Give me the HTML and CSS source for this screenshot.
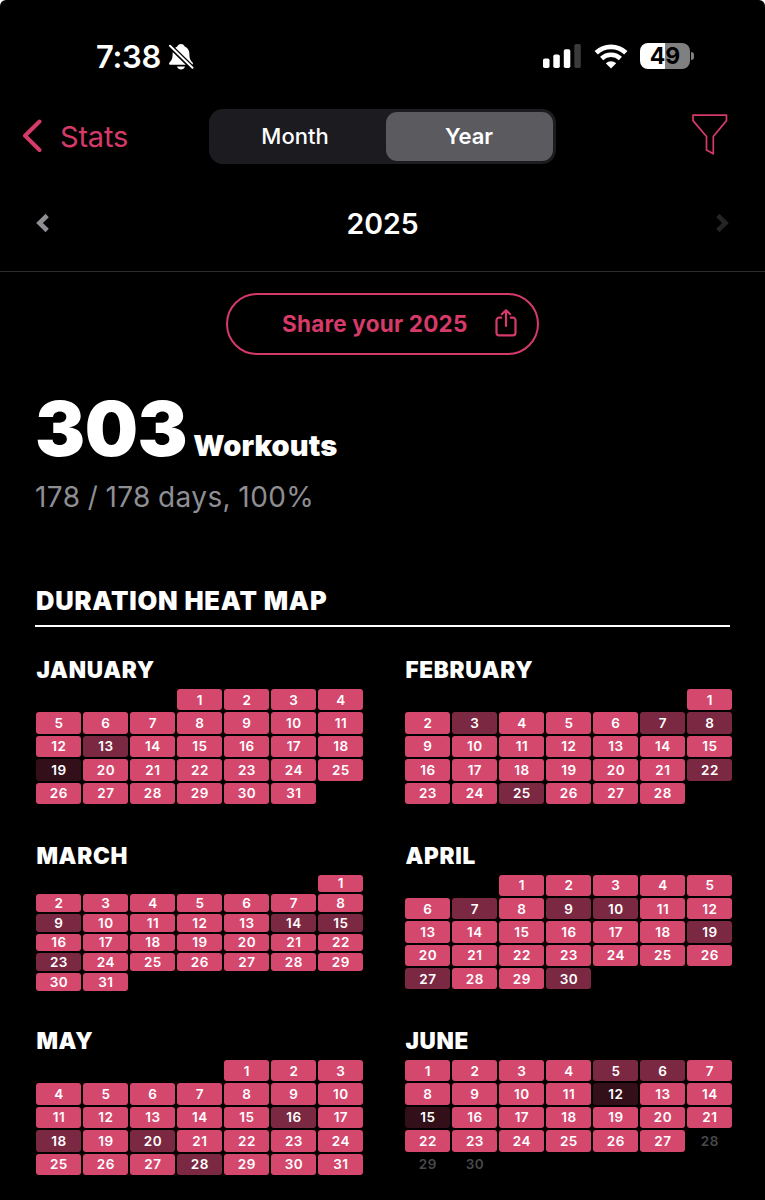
FILE: index.html
```
<!DOCTYPE html>
<html lang="en">
<head>
    <meta charset="UTF-8">
    <meta name="viewport" content="width=device-width, initial-scale=1.0">
    <title>Stats - 2025</title>
    <link rel="stylesheet" href="styles.css">
</head>
<body>
    <div class="screen">
        <div class="status-bar">
            <div class="status-left">
                <span class="clock">7:38</span>
                <svg class="bell" width="26" height="28" viewBox="0 0 26 28">
                    <path d="M13 1c-1.900 0-3.200 1-3.700 2.500C6 4.800 4.600 7.600 4.600 11c0 5-1.100 6.300-3.100 8.400-.9 1-.4 2.400 1 2.400h21c1.400 0 1.900-1.400 1-2.400-2-2.100-3.100-3.400-3.100-8.400 0-3.400-1.400-6.200-4.700-7.500C16.200 2 14.900 1 13 1z" fill="#fff"/>
                    <path d="M9 23.600h8c-.6 1.900-2.100 3-4 3s-3.400-1.100-4-3z" fill="#fff"/>
                    <path d="M1.500 2.500l23 22.500" stroke="#000" stroke-width="4.800"/>
                    <path d="M2 2.800l22.500 22" stroke="#fff" stroke-width="2" stroke-linecap="round"/>
                </svg>
            </div>
            <div class="status-right">
                <svg width="38" height="25" viewBox="0 0 38 25">
                    <rect x="0" y="14.500" width="6.500" height="9.500" rx="1.800" fill="#fff"/>
                    <rect x="10.300" y="10.500" width="6.500" height="13.500" rx="1.800" fill="#fff"/>
                    <rect x="20.800" y="5.300" width="6.500" height="18.700" rx="1.800" fill="#fff"/>
                    <rect x="31.300" y="0" width="6.500" height="24" rx="1.800" fill="#3a3a3a"/>
                </svg>
                <svg class="wifi" width="34" height="25" viewBox="0 0 34 25">
                    <path d="M2.200 8.700a21.500 21.500 0 0 1 29.600 0" fill="none" stroke="#fff" stroke-width="4.800"/>
                    <path d="M7.600 14.500a13.800 13.800 0 0 1 18.800 0" fill="none" stroke="#fff" stroke-width="4.500"/>
                    <path d="M17 24.500l-5.200-5.200a7.700 7.700 0 0 1 10.400 0z" fill="#fff"/>
                </svg>
                <div class="battery">49</div>
                <span class="battery-cap"></span>
            </div>
        </div>

        <div class="nav">
            <a class="back">
                <svg width="22" height="36" viewBox="0 0 22 36">
                    <path d="M19.500 3.500L5 17.700l14.500 14.300" fill="none" stroke="#d63a68" stroke-width="4" stroke-linecap="round" stroke-linejoin="round"/>
                </svg>
                <span>Stats</span>
            </a>
            <div class="segmented">
                <div class="segment">Month</div>
                <div class="segment active">Year</div>
            </div>
            <svg class="filter" width="36" height="42" viewBox="0 0 36 42">
                <path d="M1 1.200h33.500v5.400L21.300 22.500v17.300l-6.800-3.700V22.500L1 6.600z" fill="none" stroke="#d63a68" stroke-width="1.700" stroke-linejoin="round"/>
            </svg>
        </div>

        <div class="year-row">
            <svg width="14" height="20" viewBox="0 0 14 20">
                <path d="M11.200 2.500L3.500 10l7.700 7.500" fill="none" stroke="#8e8e93" stroke-width="4.600"/>
            </svg>
            <span class="year">2025</span>
            <svg width="14" height="20" viewBox="0 0 14 20">
                <path d="M2.800 2.500l7.700 7.500-7.700 7.500" fill="none" stroke="#242426" stroke-width="4.600"/>
            </svg>
        </div>

        <div class="share">
            <span>Share your 2025</span>
            <svg width="22" height="29" viewBox="0 0 22 29">
                <path d="M6.200 8.700H4a2.500 2.500 0 0 0-2.500 2.500v12.600A2.500 2.500 0 0 0 4 26.300h14a2.500 2.500 0 0 0 2.500-2.500V11.200A2.500 2.500 0 0 0 18 8.700h-2.200M11 17V1.600M6.800 5.200L11 1.200l4.200 4" fill="none" stroke="#d63a68" stroke-width="2.200" stroke-linecap="round" stroke-linejoin="round"/>
            </svg>
        </div>

        <div class="summary">
            <div class="total"><span class="count">303</span><span class="unit">Workouts</span></div>
            <div class="days-total">178 / 178 days, 100%</div>
        </div>

        <h2>DURATION HEAT MAP</h2>
        <div class="months" id="months"></div>
    </div>

    <script>
        // start: weekday of the 1st (0 = Sunday), mid / low: shorter workout days
        const months = [
            { name: 'JANUARY', start: 3, days: 31, mid: [13], low: [19] },
            { name: 'FEBRUARY', start: 6, days: 28, mid: [3, 7, 8, 22, 25], low: [] },
            { name: 'MARCH', start: 6, days: 31, mid: [9, 14, 15, 23], low: [] },
            { name: 'APRIL', start: 2, days: 30, mid: [7, 9, 10, 19, 27, 30], low: [] },
            { name: 'MAY', start: 4, days: 31, mid: [16, 18, 20, 28], low: [] },
            { name: 'JUNE', start: 0, days: 30, mid: [5, 6], low: [12, 15], last: 27 }
        ];

        const container = document.getElementById('months');

        months.forEach((month) => {
            const el = document.createElement('div');
            el.className = 'month';

            const title = document.createElement('h3');
            title.textContent = month.name;
            el.appendChild(title);

            const grid = document.createElement('div');
            grid.className = 'grid';
            if (month.start + month.days > 35) {
                grid.classList.add('six-rows');
            }

            for (let i = 0; i < month.start; i++) {
                grid.appendChild(document.createElement('span'));
            }

            for (let d = 1; d <= month.days; d++) {
                const day = document.createElement('span');
                day.className = 'day';
                if (month.mid.includes(d)) day.classList.add('mid');
                if (month.low.includes(d)) day.classList.add('low');
                if (month.last && d > month.last) day.classList.add('future');
                day.textContent = d;
                grid.appendChild(day);
            }

            el.appendChild(grid);
            container.appendChild(el);
        });
    </script>
</body>
</html>
```
FILE: styles.css
```
body {
    margin: 0;
    background: #fff;
    font-family: Inter, "Liberation Sans", sans-serif;
    color: #fff;
}
.screen {
    width: 765px;
    height: 1200px;
    box-sizing: border-box;
    overflow: hidden;
    background: #000;
    border-radius: 6px 6px 0 0;
}
.status-bar {
    display: flex;
    justify-content: space-between;
    align-items: center;
    height: 109px;
    padding: 3px 71px 0 96px;
    box-sizing: border-box;
}
.status-left,
.status-right {
    display: flex;
    align-items: center;
}
.clock {
    font-size: 31px;
    font-weight: 600;
    letter-spacing: -0.3px;
}
.bell {
    margin: 1px 0 0 7px;
}
.wifi {
    margin: 0 12px 0 13px;
}
.battery {
    width: 50px;
    height: 26px;
    border-radius: 8px;
    background: linear-gradient(to right, #fff 50%, #808080 50%);
    color: #000;
    font-size: 23px;
    font-weight: 700;
    line-height: 26px;
    text-align: center;
}
.battery-cap {
    width: 3px;
    height: 8px;
    margin-left: 1px;
    border-radius: 0 3px 3px 0;
    background: #808080;
}
.nav {
    display: grid;
    grid-template-columns: 1fr 348px 1fr;
    align-items: center;
    height: 55px;
    padding: 0 37px 0 20px;
}
.back {
    display: flex;
    align-items: center;
    gap: 18px;
    margin-top: -1px;
    color: #d63a68;
    font-size: 29px;
    letter-spacing: -0.2px;
}
.segmented {
    display: flex;
    width: 347px;
    height: 55px;
    margin-left: 8.500px;
    padding: 3px;
    box-sizing: border-box;
    border-radius: 14px;
    background: #1c1b1f;
}
.segment {
    flex: 1;
    display: flex;
    align-items: center;
    justify-content: center;
    padding: 0 7px 1px 0;
    border-radius: 11px;
    font-size: 22px;
    font-weight: 500;
}
.segment.active {
    flex: 0 0 167px;
    box-sizing: border-box;
    padding-right: 0;
    background: #5b5a5f;
    font-weight: 600;
}
.filter {
    justify-self: end;
    margin-top: -3px;
}
.year-row {
    display: flex;
    align-items: center;
    justify-content: space-between;
    height: 107px;
    padding: 0 36px;
    border-bottom: 1px solid #2c2c2e;
}
.year-row svg {
    margin-top: 11px;
}
.year {
    margin-top: 12px;
    font-size: 28.500px;
    font-weight: 600;
}
.share {
    display: flex;
    align-items: center;
    justify-content: space-between;
    width: 313px;
    height: 62px;
    margin: 21px auto 0;
    padding: 0 20px 1px 54px;
    box-sizing: border-box;
    border: 2px solid #d63a68;
    border-radius: 31px;
    color: #d63a68;
    font-size: 22.500px;
    font-weight: 700;
    letter-spacing: 0.2px;
}
.summary {
    padding: 32px 36px 0;
}
.total {
    display: flex;
    align-items: baseline;
    gap: 6px;
    height: 84px;
    margin-left: -1px;
    line-height: 84px;
}
.count {
    font-size: 75px;
    font-weight: 900;
    letter-spacing: -0.5px;
}
.unit {
    font-size: 29px;
    font-weight: 900;
    letter-spacing: 0.1px;
}
.days-total {
    margin-top: 9px;
    margin-left: -1px;
    color: #8e8e93;
    font-size: 28px;
    line-height: 34px;
    letter-spacing: 0.4px;
    word-spacing: -1px;
}
h2 {
    margin: 70px 35px 0;
    padding: 0 0 7px 1px;
    border-bottom: 2px solid #fff;
    font-size: 25.500px;
    font-weight: 900;
    line-height: 34px;
    letter-spacing: 0.800px;
}
.months {
    display: grid;
    grid-template-columns: 327px 327px;
    grid-auto-rows: 185.500px;
    column-gap: 42px;
    padding: 28px 36.400px 0;
}
h3 {
    margin: 0 0 4px;
    font-size: 22.500px;
    font-weight: 900;
    line-height: 30px;
    letter-spacing: 0.700px;
}
.grid {
    display: grid;
    grid-template-columns: repeat(7, 1fr);
    grid-auto-rows: 21.400px;
    gap: 2px;
}
.grid.six-rows {
    grid-auto-rows: 17.700px;
}
.day {
    display: flex;
    align-items: center;
    justify-content: center;
    border-radius: 3px;
    background: #d4486e;
    font-size: 13.500px;
    font-weight: 600;
    letter-spacing: 0.5px;
}
.day.mid {
    background: #7b2942;
}
.day.low {
    background: #330f1a;
}
.day.future {
    background: none;
    color: #48484a;
}
```
